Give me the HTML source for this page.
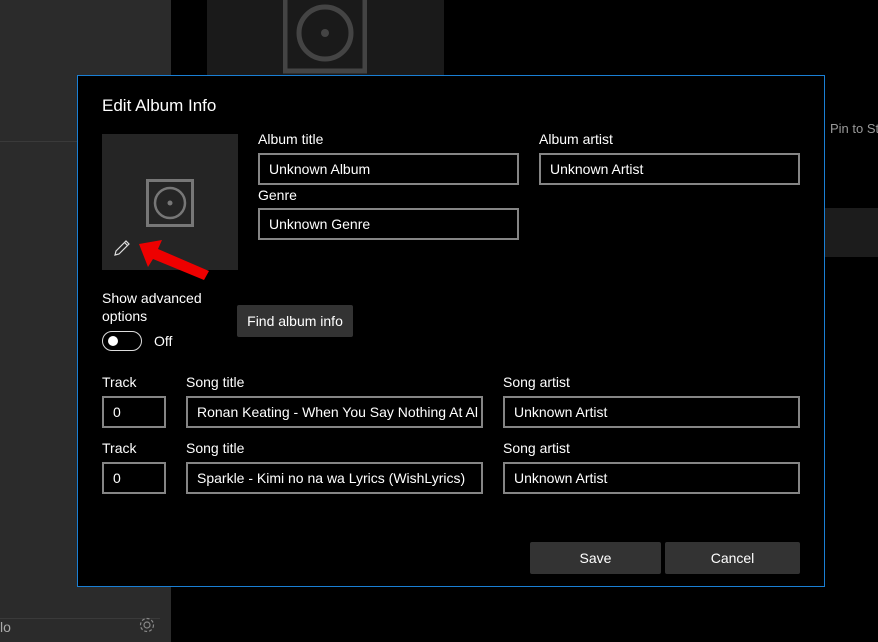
<!DOCTYPE html>
<html><head><style>
*{margin:0;padding:0;box-sizing:border-box}
body{width:878px;height:642px;background:#000;font-family:"Liberation Sans",sans-serif;color:#fff;position:relative;overflow:hidden;font-size:14px}
.a{position:absolute;white-space:nowrap}
.inp{position:absolute;border:2px solid #858585;background:#000;height:32px;padding-left:9px;line-height:29px;font-size:14px;white-space:nowrap;overflow:hidden}
.lbl{position:absolute;font-size:14px;white-space:nowrap}
.btn{position:absolute;background:#333;text-align:center;font-size:14px;border-radius:2px}
</style></head><body>
<div class="a" style="left:0;top:0;width:171px;height:642px;background:#2b2b2b"></div>
<div class="a" style="left:0;top:141px;width:171px;height:1px;background:#3a3a3a"></div>
<div class="a" style="left:0;top:618px;width:160px;height:1px;background:#3a3a3a"></div>
<div class="a" style="left:0;top:619px;font-size:14px;color:#aaa">lo</div>
<svg class="a" style="left:138px;top:616px" width="18" height="18" viewBox="0 0 18 18"><circle cx="9" cy="9" r="3" fill="none" stroke="#888" stroke-width="1.2"/><circle cx="9" cy="9" r="6.5" fill="none" stroke="#888" stroke-width="1.2" stroke-dasharray="3 2"/></svg>
<div class="a" style="left:207px;top:0;width:237px;height:75px;background:#1a1a1a"></div>
<svg class="a" style="left:283px;top:0" width="84" height="75"><rect x="2" y="-10" width="80" height="81" fill="none" stroke="#444" stroke-width="5"/><circle cx="42" cy="33" r="26" fill="none" stroke="#444" stroke-width="5"/><circle cx="42" cy="33" r="4" fill="#444"/></svg>
<div class="a" style="left:824px;top:208px;width:54px;height:49px;background:#1c1c1c"></div>
<div class="a" style="left:830px;top:121px;color:#999;font-size:13px">Pin to St</div>

<div class="a" style="left:77px;top:75px;width:748px;height:512px;background:#000;border:1px solid #1a7fd4"></div>
<div class="a" style="left:102px;top:96px;font-size:17px">Edit Album Info</div>
<div class="a" style="left:102px;top:134px;width:136px;height:136px;background:#252525"></div>
<svg class="a" style="left:146px;top:179px" width="48" height="48"><rect x="1.5" y="1.5" width="45" height="45" fill="none" stroke="#777" stroke-width="3"/><circle cx="24" cy="24" r="15" fill="none" stroke="#777" stroke-width="2.5"/><circle cx="24" cy="24" r="2.5" fill="#777"/></svg>
<svg class="a" style="left:112px;top:238px" width="20" height="20"><path d="M3 17 L4 13 L14 3 L17 6 L7 16 Z M12.5 4.5 L15.5 7.5" fill="none" stroke="#ddd" stroke-width="1.2"/></svg>
<svg class="a" style="left:136px;top:238px" width="76" height="44"><path d="M3 6 L26 2 L22 11 L73 33 L68 42 L17 21 L12 29 Z" fill="#e00"/></svg>

<div class="lbl" style="left:258px;top:131px">Album title</div>
<div class="inp" style="left:258px;top:153px;width:261px">Unknown Album</div>
<div class="lbl" style="left:539px;top:131px">Album artist</div>
<div class="inp" style="left:539px;top:153px;width:261px">Unknown Artist</div>
<div class="lbl" style="left:258px;top:187px">Genre</div>
<div class="inp" style="left:258px;top:208px;width:261px">Unknown Genre</div>

<div class="lbl" style="left:102px;top:289px;line-height:18px">Show advanced<br>options</div>
<div class="a" style="left:102px;top:331px;width:40px;height:20px;border:1.5px solid #ddd;border-radius:10px"></div>
<div class="a" style="left:108px;top:336px;width:10px;height:10px;border-radius:5px;background:#fff"></div>
<div class="lbl" style="left:154px;top:333px">Off</div>
<div class="btn" style="left:237px;top:305px;width:116px;height:32px;line-height:32px">Find album info</div>

<div class="lbl" style="left:102px;top:374px">Track</div>
<div class="lbl" style="left:186px;top:374px">Song title</div>
<div class="lbl" style="left:503px;top:374px">Song artist</div>
<div class="inp" style="left:102px;top:396px;width:64px">0</div>
<div class="inp" style="left:186px;top:396px;width:297px">Ronan Keating - When You Say Nothing At Al</div>
<div class="inp" style="left:503px;top:396px;width:297px">Unknown Artist</div>
<div class="lbl" style="left:102px;top:440px">Track</div>
<div class="lbl" style="left:186px;top:440px">Song title</div>
<div class="lbl" style="left:503px;top:440px">Song artist</div>
<div class="inp" style="left:102px;top:462px;width:64px">0</div>
<div class="inp" style="left:186px;top:462px;width:297px">Sparkle - Kimi no na wa Lyrics (WishLyrics)</div>
<div class="inp" style="left:503px;top:462px;width:297px">Unknown Artist</div>

<div class="btn" style="left:530px;top:542px;width:131px;height:32px;line-height:32px">Save</div>
<div class="btn" style="left:665px;top:542px;width:135px;height:32px;line-height:32px">Cancel</div>
</body></html>
